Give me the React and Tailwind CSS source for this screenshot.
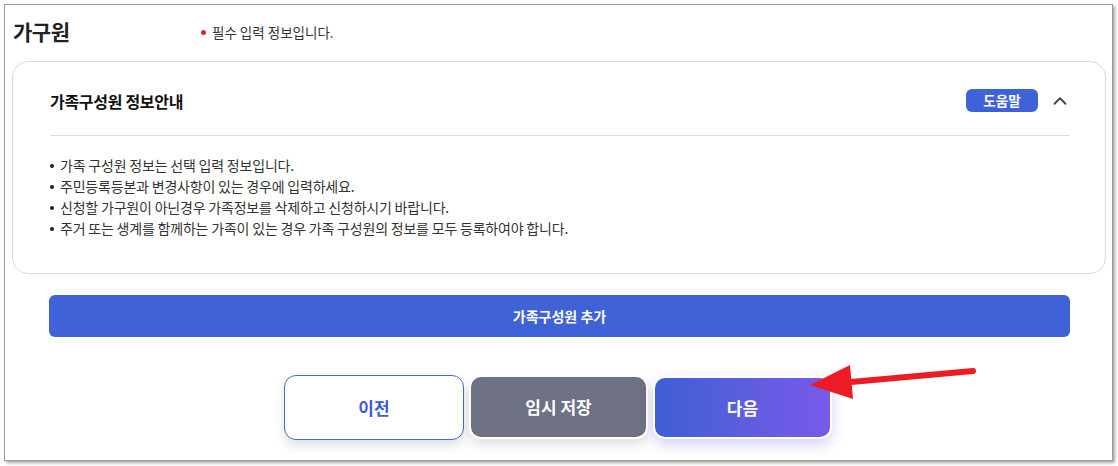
import { ChevronUp } from 'lucide-react'

const notices = [
  '가족 구성원 정보는 선택 입력 정보입니다.',
  '주민등록등본과 변경사항이 있는 경우에 입력하세요.',
  '신청할 가구원이 아닌경우 가족정보를 삭제하고 신청하시기 바랍니다.',
  '주거 또는 생계를 함께하는 가족이 있는 경우 가족 구성원의 정보를 모두 등록하여야 합니다.',
]

function Arrow() {
  return (
    <svg className="absolute left-0 top-0 pointer-events-none" width="1118" height="466">
      <line x1="973" y1="371" x2="840" y2="383" stroke="#ed1c24" strokeWidth="6" strokeLinecap="round" />
      <polygon points="810,385 850,365 853,399" fill="#ed1c24" />
    </svg>
  )
}

export default function App() {
  return (
    <div
      className="relative w-[1118px] h-[466px] bg-white pt-[4px] pl-[4px] overflow-hidden"
      style={{ fontFamily: '"Noto Sans CJK KR", "Noto Sans", sans-serif' }}
    >
      <div className="w-[1109px] h-[457px] bg-white border border-[#9a9a9a] shadow-[2px_2px_3px_rgba(0,0,0,0.35)]">
        <div className="flex items-center h-[52px] pl-[8px] pt-[2px]">
          <h2 className="w-[188px] text-[21px] font-bold text-[#222] tracking-[-0.5px]">가구원</h2>
          <p className="flex items-center text-[13.5px] text-[#333]">
            <span className="w-[5px] h-[5px] rounded-full bg-[#d9262b] mr-[6px]"></span>
            필수 입력 정보입니다.
          </p>
        </div>

        <div className="ml-[7px] mr-[6px] mt-[4px] h-[213px] border border-[#dcdcdc] rounded-[16px] pt-[27px] pl-[37px] pr-[38px]">
          <div className="flex items-center justify-between h-[23px]">
            <h3 className="text-[16px] font-bold text-[#111] tracking-[-0.3px]">가족구성원 정보안내</h3>
            <div className="flex items-center">
              <span className="flex items-center justify-center w-[72px] h-[23px] rounded-[6px] bg-[#3f62d8] text-white text-[13.5px] font-bold">
                도움말
              </span>
              <ChevronUp className="ml-[11px] mr-[-4px] text-[#444]" size={22} strokeWidth={2} />
            </div>
          </div>
          <div className="mt-[23px] mr-[-3px] border-t border-[#dedede]"></div>
          <ul className="mt-[19px] text-[14px] leading-[21px] text-[#333] tracking-[-0.2px]">
            {notices.map((t) => (
              <li key={t} className="flex items-center">
                <span className="w-[4px] h-[4px] rounded-full bg-[#222] mr-[6px]"></span>
                {t}
              </li>
            ))}
          </ul>
        </div>

        <div className="ml-[44px] mr-[42px] mt-[21px]">
          <button className="w-full h-[42px] rounded-[6px] bg-[#3f62d8] text-white text-[14px] font-bold">
            가족구성원 추가
          </button>
        </div>

        <div className="flex justify-center gap-[5px] mt-[38px] pr-[1px]">
          <button className="w-[180px] h-[65px] rounded-[12px] border border-[#4a66d9] bg-white text-[#3f5bd6] text-[17px] font-bold shadow-[0_6px_12px_rgba(0,0,0,0.12)]">
            이전
          </button>
          <button className="w-[179px] h-[64px] rounded-[12px] border-2 border-white bg-[#6e7084] text-white text-[17px] font-bold shadow-[0_6px_12px_rgba(0,0,0,0.12)]">
            임시 저장
          </button>
          <button className="w-[179px] h-[63px] mt-[1px] rounded-[12px] border-2 border-white bg-linear-to-r from-[#3d5fd6] to-[#765ae9] text-white text-[17px] font-bold shadow-[0_6px_14px_rgba(90,80,220,0.25)]">
            다음
          </button>
        </div>
      </div>
      <Arrow />
    </div>
  )
}
